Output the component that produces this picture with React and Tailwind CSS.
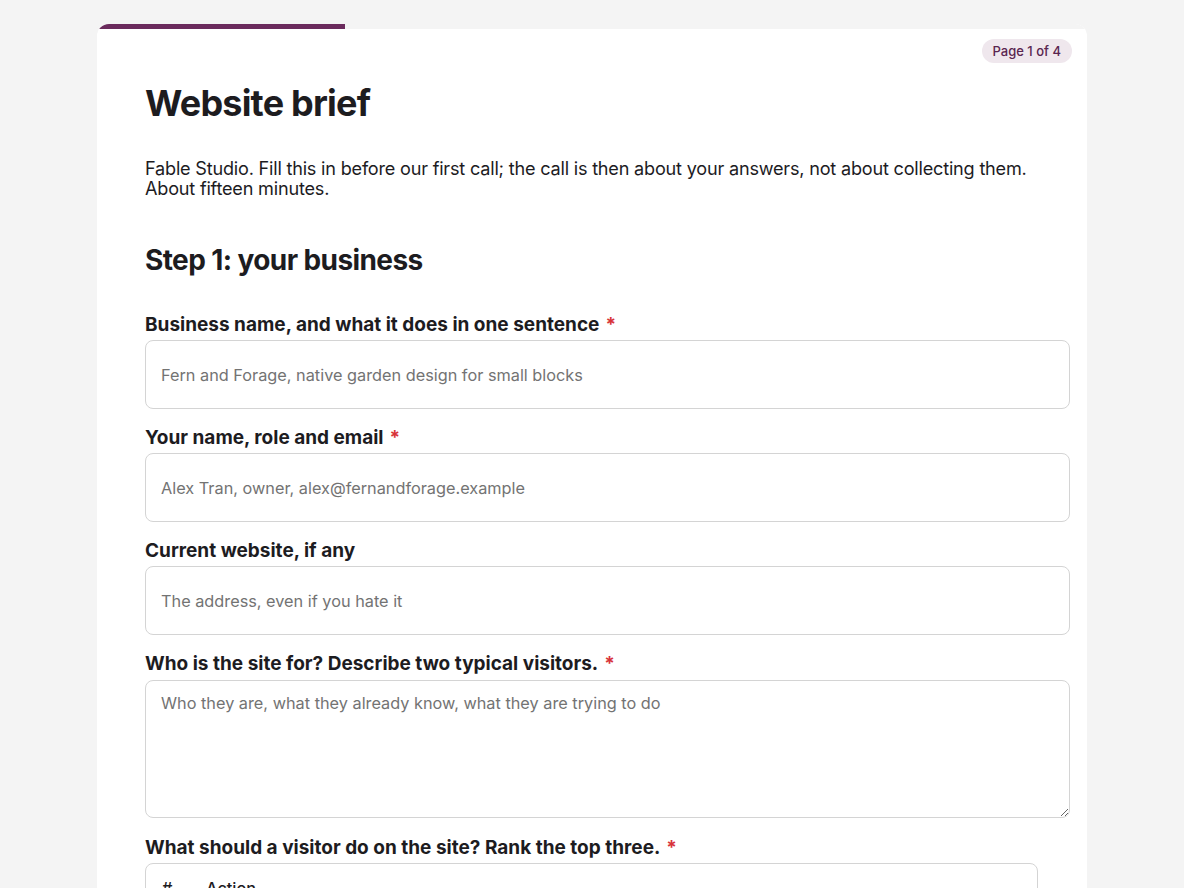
import React from "react";

const font = { fontFamily: "Inter, 'Noto Sans', sans-serif" };

function Label({ children, required }) {
    return (
        <label className="block text-[19px] leading-6 font-bold text-[#1d1c1f] tracking-[0px]">
            {children}
            {required && <span className="text-[#d8343a] ml-1.5">*</span>}
        </label>
    );
}

function Field({ label, required, placeholder }) {
    return (
        <div className="mb-[17px]">
            <Label required={required}>{label}</Label>
            <input
                type="text"
                placeholder={placeholder}
                className="mt-[3px] block w-full h-[69px] rounded-lg border border-[#d4d4d4] bg-white px-[15px] text-[16.3px] text-[#1d1c1f] placeholder:text-[#737373] outline-none"
            />
        </div>
    );
}

export default function App() {
    return (
        <div className="min-h-screen bg-[#f4f4f4] pt-6" style={font}>
            <div className="relative mx-auto w-[990px] rounded-t-xl bg-white overflow-hidden">
                <div className="h-[5px] bg-[#f4f4f4]">
                    <div className="h-full w-1/4 rounded-tl-xl bg-[#6b2b5d]"></div>
                </div>
                <span className="absolute top-[15px] right-[15px] rounded-full bg-[#efe7ed] px-[11px] py-[3px] text-[13px] leading-[18px] font-medium text-[#5a2550]">
                    Page 1 of 4
                </span>
                <div className="pl-12 pr-[17px] pt-[52px] pb-10">
                    <h1 className="text-[36px] leading-[44px] font-bold text-[#1d1c1f] tracking-[-0.8px]">
                        Website brief
                    </h1>
                    <p className="mt-[33px] text-[18.1px] leading-5 text-[#1d1c1f] tracking-[-0.2px]">
                        Fable Studio. Fill this in before our first call; the call is then about your answers, not about collecting them. About fifteen minutes.
                    </p>
                    <h2 className="mt-[44px] text-[28px] leading-9 font-bold text-[#1d1c1f] tracking-[-0.6px]">
                        Step 1: your business
                    </h2>
                    <div className="mt-[35px]">
                        <Field
                            label="Business name, and what it does in one sentence"
                            required
                            placeholder="Fern and Forage, native garden design for small blocks"
                        />
                        <Field
                            label="Your name, role and email"
                            required
                            placeholder="Alex Tran, owner, alex@fernandforage.example"
                        />
                        <Field
                            label="Current website, if any"
                            placeholder="The address, even if you hate it"
                        />
                        <div className="mb-[18px]">
                            <Label required>Who is the site for? Describe two typical visitors.</Label>
                            <textarea
                                placeholder="Who they are, what they already know, what they are trying to do"
                                className="mt-[4px] block w-full h-[138px] rounded-lg border border-[#d4d4d4] bg-white px-[15px] py-[10px] text-[16.3px] leading-6 text-[#1d1c1f] placeholder:text-[#737373] outline-none"
                            ></textarea>
                        </div>
                        <div>
                            <Label required>What should a visitor do on the site? Rank the top three.</Label>
                            <div className="mt-[3px] w-[893px] rounded-t-lg border border-[#d4d4d4]">
                                <div className="flex px-4 pt-[12px] pb-3 text-[16.3px] leading-6 font-medium text-[#1d1c1f]">
                                    <span className="w-11">#</span>
                                    <span>Action</span>
                                </div>
                                <div className="h-20"></div>
                            </div>
                        </div>
                    </div>
                </div>
            </div>
        </div>
    );
}
